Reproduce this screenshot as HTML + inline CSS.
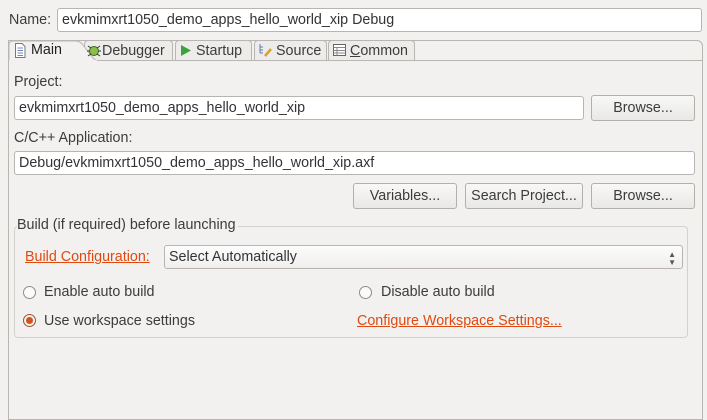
<!DOCTYPE html>
<html><head><style>
body{margin:0;width:707px;height:413px;background:#f2f1f0;font-family:"Liberation Sans",sans-serif;font-size:14.3px;color:#3c3c3c;position:relative;overflow:hidden}
.a{position:absolute;white-space:nowrap}
.inp{position:absolute;background:#fff;border:1px solid #b8b5b0;border-radius:3px;box-sizing:border-box;padding-left:4px;line-height:22px;color:#333;white-space:nowrap}
.btn{position:absolute;border:1px solid #b3b0ab;border-radius:3px;box-sizing:border-box;background:linear-gradient(#f8f8f7,#e9e8e6);text-align:center;line-height:24px;color:#3c3c3c}
.tab{position:absolute;top:40px;height:20px;border:1px solid #b9b6b1;border-bottom:none;border-radius:4px 4px 0 0;box-sizing:border-box;background:#edecea;line-height:20px;padding-left:4px;white-space:nowrap;overflow:hidden}
.lnk{color:#e04a10;text-decoration:underline}
.rad{position:absolute;width:13px;height:13px;border:1px solid #8f8c88;border-radius:50%;box-sizing:border-box;background:#fafafa}
</style></head><body>
<div class="a" style="left:9px;top:12px">Name:</div>
<div class="inp" style="left:57px;top:8px;width:645px;height:24px">evkmimxrt1050_demo_apps_hello_world_xip Debug</div>
<div style="position:absolute;left:8px;top:40px;width:695px;height:380px;border:1px solid #b9b6b1;border-radius:0 6px 0 0;box-sizing:border-box"></div>
<div style="position:absolute;left:8px;top:60px;width:695px;border-top:1px solid #b9b6b1"></div>
<div class="tab" style="left:84px;width:89px;padding-left:17px">Debugger</div>
<div class="tab" style="left:175px;width:77px;padding-left:20px">Startup</div>
<div class="tab" style="left:254px;width:73px;padding-left:21px">Source</div>
<div class="tab" style="left:328px;width:87px;padding-left:21px"><u>C</u>ommon</div>
<svg class="a" style="left:8px;top:40px" width="90" height="22"><path d="M1 21 V5 Q1 1 5 1 H68 Q72 1 75 5 L85 18 Q88 21 92 21" fill="#f2f1f0" stroke="#b9b6b1"/><rect x="1" y="20" width="88" height="2" fill="#f2f1f0"/></svg>
<div class="a" style="left:31px;top:42px;color:#222">Main</div>
<svg class="a" style="left:14px;top:43px" width="12" height="15"><path d="M1.5 .5H8L11 3.5V14.5H1.5Z" fill="#fff" stroke="#6d7a8c"/><path d="M3.5 5H9M3.5 7.5H9M3.5 10H9M3.5 12.5H9" stroke="#6d86b0"/></svg>
<svg class="a" style="left:86px;top:43px" width="15" height="15"><circle cx="8" cy="8" r="4.5" fill="#8bbf4a" stroke="#3d6a1c"/><path d="M2 3L5 5M14 3L11 5M1 8H3.5M15 8H12.5M2 13L5 11M14 13L11 11" stroke="#333"/></svg>
<svg class="a" style="left:180px;top:44px" width="12" height="13"><path d="M1 1L11 6.5L1 12Z" fill="#3da23d"/></svg>
<svg class="a" style="left:258px;top:43px" width="15" height="15"><path d="M2 1V10M2 4H5M2 7H5M2 10H5" stroke="#5a7bb0"/><path d="M7 13L13 6" stroke="#d8a030" stroke-width="2.5"/></svg>
<svg class="a" style="left:333px;top:44px" width="13" height="12"><rect x=".5" y=".5" width="12" height="11" fill="#fff" stroke="#666"/><path d="M.5 3.5H12.5M.5 6.5H12.5M.5 9H12.5M4 3.5V11.5" stroke="#888"/></svg>
<div class="a" style="left:14px;top:74px">Project:</div>
<div class="inp" style="left:14px;top:96px;width:570px;height:24px">evkmimxrt1050_demo_apps_hello_world_xip</div>
<div class="btn" style="left:591px;top:95px;width:104px;height:26px">Browse...</div>
<div class="a" style="left:14px;top:130px">C/C++ Application:</div>
<div class="inp" style="left:14px;top:151px;width:681px;height:24px">Debug/evkmimxrt1050_demo_apps_hello_world_xip.axf</div>
<div class="btn" style="left:353px;top:183px;width:104px;height:26px">Variables...</div>
<div class="btn" style="left:465px;top:183px;width:118px;height:26px">Search Project...</div>
<div class="btn" style="left:591px;top:183px;width:104px;height:26px">Browse...</div>
<div style="position:absolute;left:14px;top:226px;width:674px;height:112px;border:1px solid #d4d1cc;border-radius:4px;box-sizing:border-box"></div>
<div class="a" style="left:17px;top:217px;background:#f2f1f0;padding-right:2px">Build (if required) before launching</div>
<div class="a lnk" style="left:25px;top:249px">Build Configuration:</div>
<div class="inp" style="left:164px;top:245px;width:519px;height:24px;background:linear-gradient(#fcfcfc,#f0efee)">Select Automatically<span style="position:absolute;right:6px;top:5px;font-size:8px;line-height:8px;color:#555">▲<br>▼</span></div>
<div class="rad" style="left:23px;top:286px"></div>
<div class="a" style="left:44px;top:284px">Enable auto build</div>
<div class="rad" style="left:359px;top:286px"></div>
<div class="a" style="left:381px;top:284px">Disable auto build</div>
<div class="rad" style="left:23px;top:314px;background:#f0f0f0;border-color:#a0522d"><div style="position:absolute;left:2px;top:2px;width:7px;height:7px;border-radius:50%;background:#d4521c"></div></div>
<div class="a" style="left:44px;top:313px">Use workspace settings</div>
<div class="a lnk" style="left:357px;top:313px">Configure Workspace Settings...</div>
</body></html>
